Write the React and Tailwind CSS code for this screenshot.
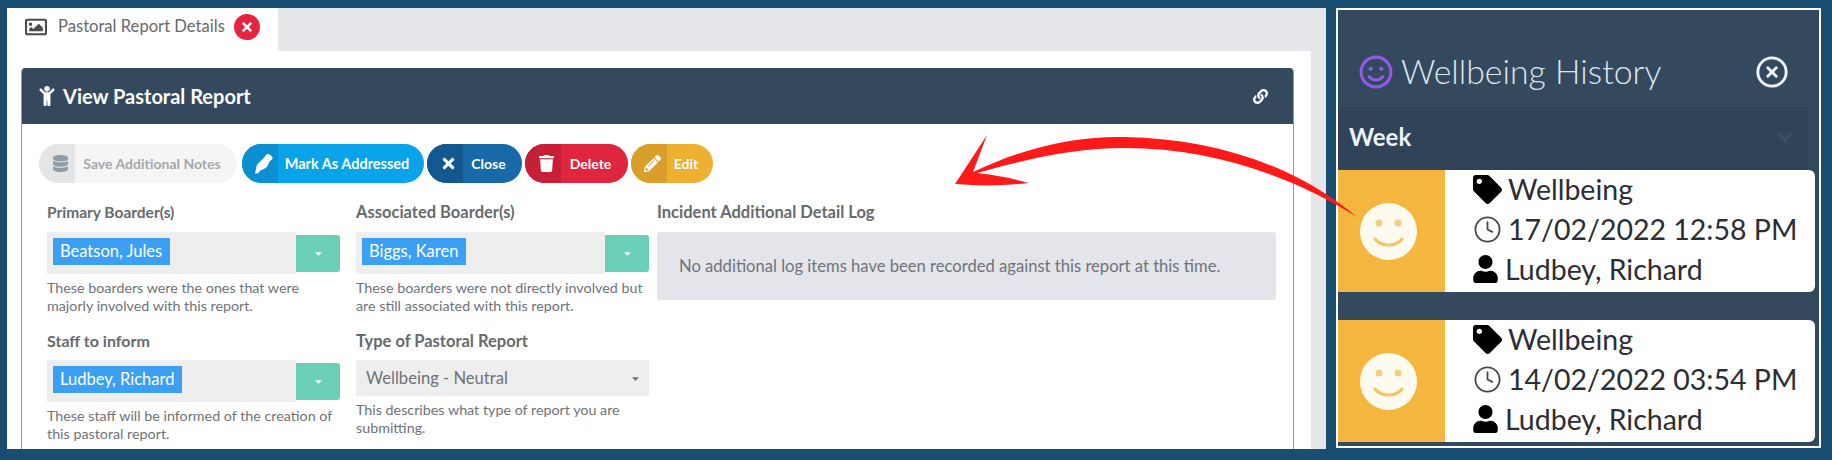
import { FaChild, FaDatabase, FaLink, FaPencilAlt, FaRegImage, FaRegSmile, FaTag, FaTimes, FaTrash, FaUser, FaCaretDown, FaChevronDown } from 'react-icons/fa';
import { LuCircleX, LuClock } from 'react-icons/lu';

const MarkerIcon = () => (
  <svg width="19" height="21" viewBox="0 0 20 22" fill="currentColor">
    <path d="M12 3 C13 1 15 0.5 16.5 1.5 L18.5 3 C20 4.2 19.8 6 18.5 7 L16.5 8.5 L14 14 C13 15.6 11 17 8.5 17.6 L7 18 L4 21.5 L1 21.5 L2 17.5 L2.5 14.5 C3 12.5 4.5 10.5 6 9.5 Z" />
  </svg>
);

const ActionButton = ({ icon, label, width, iconBg, bg, text = 'text-white', labelClass = 'text-[14px]' }) => (
  <div className={`flex h-[39px] rounded-full overflow-hidden ${bg} ${text} ${width}`}>
    <div className={`w-[36px] shrink-0 flex items-center justify-center pl-[6px] text-[17px] ${iconBg}`}>{icon}</div>
    <div className={`flex-1 flex items-center justify-center pr-2 font-bold whitespace-nowrap ${labelClass}`}>{label}</div>
  </div>
);

const BoarderSelect = ({ label, tag, tagWidth, help, labelSize = 'text-[16px]', gap = 'mt-[10px]' }) => (
  <div className="w-[293px]">
    <div className={`h-[20px] leading-[20px] font-bold text-[#676a6c] ${labelSize}`}>{label}</div>
    <div className={`flex items-center ${gap}`}>
      <div className="w-[249px] h-[42px] bg-[#eeeeee] pl-[6px] pt-[6px]">
        <div className={`h-[27px] bg-[#3b9ff3] text-white text-[16.5px] leading-[27px] pl-[7px] whitespace-nowrap ${tagWidth}`}>{tag}</div>
      </div>
      <div className="w-[44px] h-[37px] bg-[#6acfb6] rounded-r-[3px] flex items-center justify-center text-white text-[11px]"><FaCaretDown /></div>
    </div>
    <p className="mt-[5px] text-[14.3px] leading-[18px] text-[#6f7377]">{help}</p>
  </div>
);

const HistorySmile = () => (
  <svg width="57" height="57" viewBox="0 0 57 57" className="mr-[7px]">
    <circle cx="28.5" cy="28.5" r="28.5" fill="#fdfaf0" />
    <circle cx="19" cy="20" r="3.5" fill="#f2cf80" />
    <circle cx="38" cy="20" r="3.5" fill="#f2cf80" />
    <path d="M15 36 C21 44 36 44 42 36" fill="none" stroke="#f2c565" strokeWidth="3" strokeLinecap="round" />
  </svg>
);

const HistoryCard = ({ date }) => (
  <div className="flex h-[122px] w-[477px] bg-white rounded-r-[6px] overflow-hidden">
    <div className="w-[107px] bg-[#f4b63f] flex items-center justify-center">
      <HistorySmile />
    </div>
    <div className="pl-[28px] text-[#2b2e33] text-[28.5px] leading-[40px] -mt-[1px]">
      <div className="flex items-center"><FaTag className="text-black w-[29px] h-[29px] mr-[6px]" /><span>Wellbeing</span></div>
      <div className="flex items-center"><LuClock strokeWidth={1.5} className="text-[#44474b] w-[29px] h-[29px] mr-[6px]" /><span>{date}</span></div>
      <div className="flex items-center"><FaUser className="text-black w-[25px] h-[28px] mr-[7px]" /><span>Ludbey, Richard</span></div>
    </div>
  </div>
);

export default function App() {
  return (
    <div className="relative w-[1832px] h-[460px] overflow-hidden bg-[#1a4d72] pt-[8px] pl-[7px] flex font-[Lato,sans-serif]">
      {/* main window */}
      <div className="w-[1319px] h-[441px] bg-[#e6e7eb] flex flex-col">
        <div className="h-[43px] w-[271px] bg-white flex items-center pl-[18px] pb-[6px] text-[#676a6c] shrink-0">
          <FaRegImage className="text-[#4a4d50] text-[22px]" />
          <span className="ml-[11px] text-[16.6px]">Pastoral Report Details</span>
          <span className="ml-[9px] w-[26px] h-[26px] rounded-full bg-[#e5243f] flex items-center justify-center text-white text-[14px]"><FaTimes /></span>
        </div>
        <div className="flex-1 min-h-0 w-[1304px] bg-white pl-[14px] pt-[17px]">
          <div className="w-[1273px] h-[381px] border-l border-r border-[#8d9aa8] rounded-t-[4px] overflow-hidden">
            <div className="h-[56px] bg-[#35495e] flex items-center justify-between pl-[15px] pr-[25px] text-white">
              <div className="flex items-center">
                <FaChild className="text-[20px]" />
                <span className="ml-[6px] text-[20px] font-bold">View Pastoral Report</span>
              </div>
              <FaLink className="text-[15px]" />
            </div>
            <div className="pt-[20px]">
              <div className="flex pl-[17px] gap-[3px]">
                <ActionButton icon={<FaDatabase />} label="Save Additional Notes" width="w-[198px] mr-[2px]" iconBg="bg-[#e4e5e7] text-[#8f9ba6]" bg="bg-[#f5f5f6]" text="text-[#a3a9ad]" />
                <ActionButton icon={<MarkerIcon />} label="Mark As Addressed" width="w-[182px]" iconBg="bg-[#0a8fd0]" bg="bg-[#08a3e8]" labelClass="text-[14.5px]" />
                <ActionButton icon={<FaTimes />} label="Close" width="w-[95px]" iconBg="bg-[#13588f]" bg="bg-[#1769a8]" />
                <ActionButton icon={<FaTrash />} label="Delete" width="w-[103px]" iconBg="bg-[#c71f37]" bg="bg-[#e0253f]" />
                <ActionButton icon={<FaPencilAlt />} label="Edit" width="w-[82px]" iconBg="bg-[#d89f2c]" bg="bg-[#eeb030]" />
              </div>
              <div className="flex pl-[25px] mt-[19px]">
                <div className="w-[293px]">
                  <BoarderSelect label="Primary Boarder(s)" tag="Beatson, Jules" tagWidth="w-[117px]" help="These boarders were the ones that were majorly involved with this report." labelSize="text-[15.5px]" />
                  <div className="mt-[16px]">
                    <BoarderSelect label="Staff to inform" tag="Ludbey, Richard" tagWidth="w-[129px]" gap="mt-[9px]" help="These staff will be informed of the creation of this pastoral report." />
                  </div>
                </div>
                <div className="w-[293px] ml-[16px]">
                  <BoarderSelect label="Associated Boarder(s)" tag="Biggs, Karen" tagWidth="w-[104px]" help="These boarders were not directly involved but are still associated with this report." labelSize="text-[16.5px]" />
                  <div className="mt-[16px]">
                    <div className="h-[20px] leading-[20px] text-[16.5px] font-bold text-[#676a6c]">Type of Pastoral Report</div>
                    <div className="mt-[9px] h-[36px] bg-[#eeeeee] flex items-center justify-between pl-[10px] pr-[8px] text-[16.6px] text-[#6f7377]">
                      <span>Wellbeing - Neutral</span>
                      <FaCaretDown className="text-[11px] text-[#666a6e]" />
                    </div>
                    <p className="mt-[5px] text-[14.3px] leading-[18px] text-[#6f7377]">This describes what type of report you are submitting.</p>
                  </div>
                </div>
                <div className="w-[619px] ml-[8px]">
                  <div className="h-[20px] leading-[20px] text-[16.5px] font-bold text-[#676a6c]">Incident Additional Detail Log</div>
                  <div className="mt-[10px] h-[68px] bg-[#e4e5ea] rounded-[3px] flex items-center pl-[22px] text-[16.6px] text-[#70747a]">
                    No additional log items have been recorded against this report at this time.
                  </div>
                </div>
              </div>
            </div>
          </div>
        </div>
      </div>

      {/* wellbeing history panel */}
      <div className="ml-[10px] w-[485px] h-[440px] border-2 border-white bg-[#35495e] flex flex-col overflow-hidden">
        <div className="h-[97px] shrink-0 flex items-center justify-between pl-[21px] pr-[30px] pt-[26px]">
          <div className="flex items-center">
            <FaRegSmile className="text-[#8d5ce0] text-[34px]" />
            <span className="ml-[8px] text-[33.8px] font-light text-[#dbe7ef]">Wellbeing History</span>
          </div>
          <LuCircleX className="text-[#f2f5f7] text-[34px]" />
        </div>
        <div className="h-[63px] shrink-0 w-[470px] bg-[#304359] flex items-center justify-between pl-[11px] pr-[14px] pb-[4px]">
          <span className="text-[24px] font-bold text-[#eef2f4]">Week</span>
          <FaChevronDown className="text-[#3d5063] text-[18px]" />
        </div>
        <div className="flex flex-col gap-[28px]">
          <HistoryCard date="17/02/2022 12:58 PM" />
          <HistoryCard date="14/02/2022 03:54 PM" />
        </div>
      </div>

      {/* red arrow over both panels */}
      <svg className="absolute left-0 top-0 pointer-events-none" width="1832" height="460" viewBox="0 0 1832 460">
        <path d="M955 184 L987 135 L973 172 C1030 145 1080 136 1125 137 C1215 139 1295 165 1357 217 C1290 175 1210 148 1125 148 C1075 148 1030 158 977 173 C995 175 1012 178 1028 183 C1005 186 980 186 955 184 Z" fill="#ff1a1a" />
      </svg>
    </div>
  );
}
